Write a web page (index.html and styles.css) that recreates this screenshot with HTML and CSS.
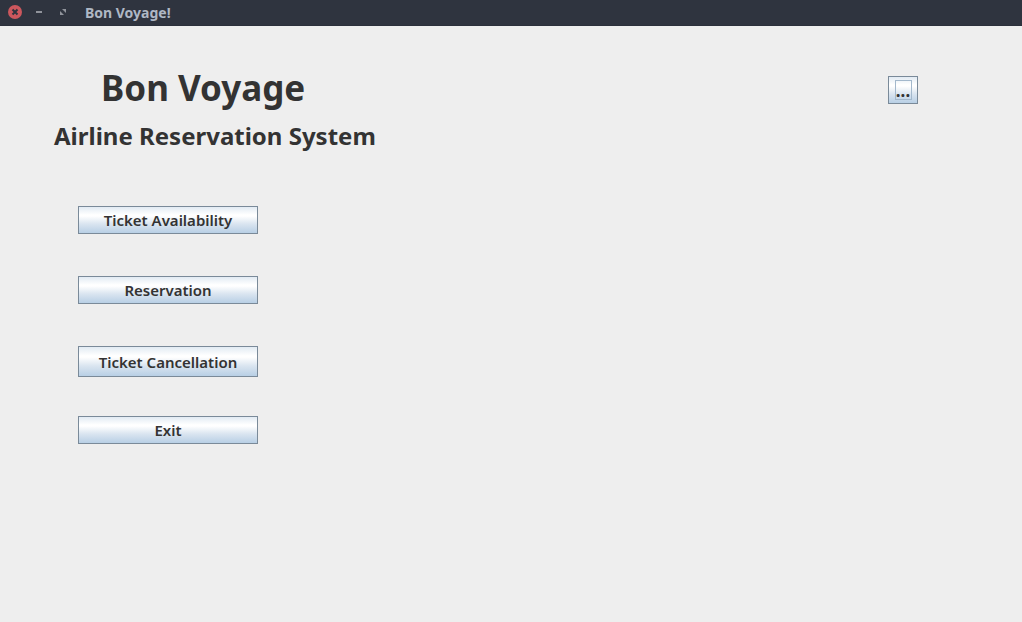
FILE: index.html
```html
<!DOCTYPE html>
<html lang="en">
<head>
<meta charset="utf-8">
<title>Bon Voyage!</title>
<link rel="stylesheet" href="styles.css">
</head>
<body>
<header class="titlebar">
  <div class="window-controls">
    <button class="control" type="button" aria-label="Close">
      <svg width="14" height="14" viewBox="0 0 14 14"><circle cx="7" cy="7" r="7" fill="#cc575d"/><path d="M4.5 4.5l5 5M9.5 4.5l-5 5" stroke="#2f343f" stroke-width="2"/></svg>
    </button>
    <button class="control" type="button" aria-label="Minimize">
      <svg width="14" height="14" viewBox="0 0 14 14"><path d="M4 6h6v2H4z" fill="#90939b"/></svg>
    </button>
    <button class="control" type="button" aria-label="Maximize">
      <svg width="14" height="14" viewBox="0 0 14 14"><path d="M6 4h4v4zM4 6v4h4z" fill="#90939b"/></svg>
    </button>
  </div>
  <span class="window-title">Bon Voyage!</span>
</header>
<main class="content">
  <div class="primary">
    <div class="headings">
      <h1 class="title">Bon Voyage</h1>
      <h2 class="subtitle">Airline Reservation System</h2>
    </div>
    <nav class="menu" aria-label="Main menu">
      <button class="button" type="button">Ticket Availability</button>
      <button class="button" type="button">Reservation</button>
      <button class="button tall" type="button">Ticket Cancellation</button>
      <button class="button" type="button">Exit</button>
    </nav>
  </div>
  <button class="button more" type="button"><span class="focus-ring">...</span></button>
</main>
</body>
</html>
```
FILE: styles.css
```css
* { box-sizing: border-box; }

body {
  margin: 0;
  min-height: 100vh;
  background: #eeeeee;
  color: #333333;
  font-family: "Noto Sans", sans-serif;
  font-weight: 700;
}

.titlebar {
  display: flex;
  align-items: flex-start;
  gap: 15px;
  height: 26px;
  padding: 0 8px;
  background: #2f343f;
  border-bottom: 1px solid #2b303b;
}

.window-controls {
  display: flex;
  gap: 10px;
  padding-top: 5px;
}

.control {
  display: flex;
  width: 14px;
  height: 14px;
  padding: 0;
  border: 0;
  background: none;
}

.window-title {
  color: #afb8c5;
  font-size: 14px;
  line-height: 26px;
}

.content {
  display: flex;
  justify-content: space-between;
  align-items: flex-start;
  padding: 38px 104px 40px 54px;
}

.headings {
  margin-bottom: 52px;
}

.title {
  margin: 0;
  padding-left: 47px;
  font-size: 35px;
  line-height: 48px;
}

.subtitle {
  margin: 6px 0 0;
  font-size: 24px;
  line-height: 36px;
  white-space: nowrap;
}

.menu {
  display: grid;
  grid-template-columns: 180px;
  grid-auto-rows: 70px;
  align-items: start;
  padding-left: 24px;
}

.button {
  height: 28px;
  padding: 0;
  border: 1px solid #7a8a99;
  background: linear-gradient(#e2ebf3 0%, #ffffff 30%, #ffffff 35%, #dae5f0 65%, #b8cfe5 100%);
  color: #333333;
  font: inherit;
  font-size: 15px;
  font-weight: 600;
  line-height: 20px;
}

.tall {
  height: 31px;
}

.more {
  display: flex;
  justify-content: center;
  width: 30px;
  margin-top: 12px;
  padding: 3px 0;
}

.focus-ring {
  display: flex;
  justify-content: center;
  width: 17px;
  height: 20px;
  border: 1px solid #a3b8cc;
  font-size: 17px;
  font-weight: 700;
}
```
